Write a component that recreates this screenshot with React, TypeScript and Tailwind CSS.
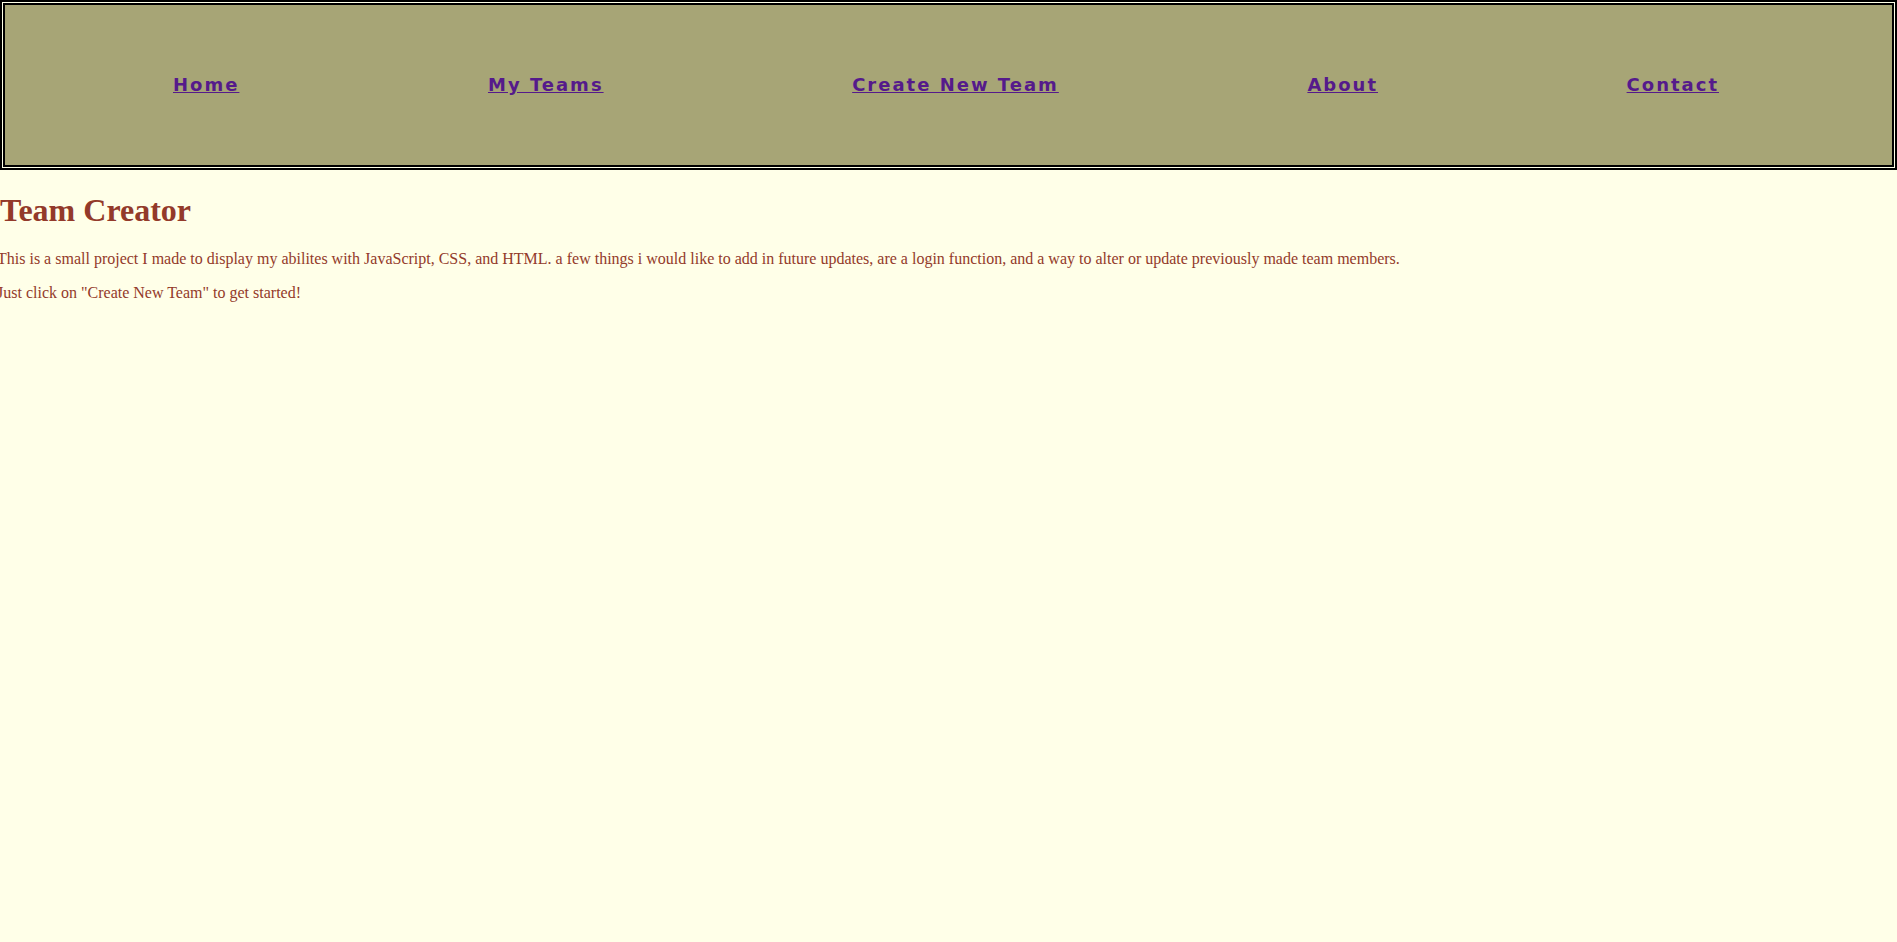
export default function App() {
  const links = ["Home", "My Teams", "Create New Team", "About", "Contact"];
  return (
    <div className="min-h-[942px] bg-[#ffffe8]" style={{ fontFamily: '"Liberation Serif", serif' }}>
      <header className="h-[170px] border-[5px] border-double border-black bg-[#a7a576] bg-clip-padding flex items-center justify-between pl-[168px] pr-[173px]">
        {links.map((l) => (
          <a
            key={l}
            href="#"
            className="text-[#551a8b] underline font-bold text-[18px] tracking-[2px] leading-[22px]"
            style={{ fontFamily: '"DejaVu Sans", sans-serif' }}
          >
            {l}
          </a>
        ))}
      </header>
      <main className="text-[#933a2a]">
        <h1 className="text-[32px] font-bold mt-[22px] mb-[21px] leading-[37px]">Team Creator</h1>
        <p className="text-[16px] leading-[18px] my-4 -ml-[3px]">
          This is a small project I made to display my abilites with JavaScript, CSS, and HTML. a few things i would like to add in future updates, are a login function, and a way to alter or update previously made team members.
        </p>
        <p className="text-[16px] leading-[18px] my-4 -ml-[3px]">Just click on "Create New Team" to get started!</p>
      </main>
    </div>
  );
}
